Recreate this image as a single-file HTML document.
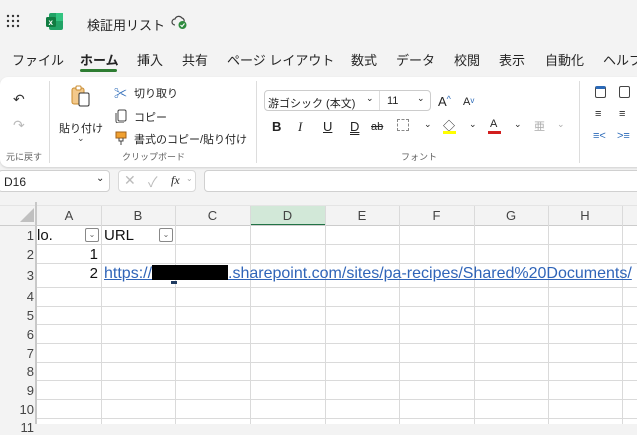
<!DOCTYPE html>
<html><head><meta charset="utf-8"><style>
*{margin:0;padding:0;box-sizing:border-box}
body{width:637px;height:424px;overflow:hidden;background:#f3f3f3;font-family:"Liberation Sans","Noto Sans CJK JP",sans-serif;position:relative;color:#242424}
.a{position:absolute;white-space:nowrap}
.t{font-size:13px;top:50px}
.s{font-size:11px}
.g{color:#616161;font-size:9px}
.hl{position:absolute;height:1px;background:#dadada;left:37px;right:0}
.vl{position:absolute;width:1px;background:#dadada;top:206px;bottom:0}
.ch{position:absolute;top:206px;height:19px;font-size:13px;color:#444;text-align:center;line-height:19px}
.rn{position:absolute;left:0;width:34px;text-align:right;font-size:13px;color:#444}
</style></head><body>
<!-- title bar -->
<svg class="a" style="left:6px;top:14px" width="14" height="14"><g fill="#333"><circle cx="2" cy="2" r="1.2"/><circle cx="7" cy="2" r="1.2"/><circle cx="12" cy="2" r="1.2"/><circle cx="2" cy="7" r="1.2"/><circle cx="7" cy="7" r="1.2"/><circle cx="12" cy="7" r="1.2"/><circle cx="2" cy="12" r="1.2"/><circle cx="7" cy="12" r="1.2"/><circle cx="12" cy="12" r="1.2"/></g></svg>
<svg class="a" style="left:46px;top:13px" width="18" height="17"><rect x="3" y="0" width="14" height="17" rx="2" fill="#21a366"/><rect x="10" y="0" width="7" height="8" fill="#33c481"/><rect x="0" y="4" width="10" height="10" rx="1.5" fill="#107c41"/><text x="2.5" y="12" font-size="8" fill="#fff" font-family="Liberation Sans" font-weight="bold">x</text></svg>
<div class="a" style="left:87px;top:15px;font-size:13px">検証用リスト</div>
<svg class="a" style="left:171px;top:14px" width="16" height="16"><path d="M4 11 A3 3 0 0 1 4 5 A4 4 0 0 1 11 4 A3 3 0 0 1 13 8" fill="none" stroke="#444" stroke-width="1.2"/><circle cx="11.5" cy="11" r="4" fill="#2e8b3e"/><path d="M9.5 11 l1.5 1.5 l2.5-3" stroke="#fff" fill="none" stroke-width="1.1"/></svg>
<!-- tabs -->
<div class="a t" style="left:12px">ファイル</div>
<div class="a t" style="left:80px;font-weight:bold">ホーム</div>
<div class="a" style="left:80px;top:69px;width:37px;height:3px;background:#2e7d32;border-radius:2px"></div>
<div class="a t" style="left:137px">挿入</div>
<div class="a t" style="left:182px">共有</div>
<div class="a t" style="left:227px">ページ レイアウト</div>
<div class="a t" style="left:351px">数式</div>
<div class="a t" style="left:396px">データ</div>
<div class="a t" style="left:454px">校閲</div>
<div class="a t" style="left:499px">表示</div>
<div class="a t" style="left:545px">自動化</div>
<div class="a t" style="left:603px">ヘルプ</div>
<!-- ribbon -->
<div class="a" style="left:0;top:77px;width:650px;height:90px;background:#fff;border-radius:8px;box-shadow:0 1px 2px rgba(0,0,0,.15)"></div>
<div class="a" style="left:49px;top:81px;width:1px;height:82px;background:#ddd"></div>
<div class="a" style="left:256px;top:81px;width:1px;height:82px;background:#ddd"></div>
<div class="a" style="left:579px;top:81px;width:1px;height:82px;background:#ddd"></div>
<div class="a" style="left:13px;top:91px;font-size:14px;color:#333">↶</div>
<div class="a" style="left:13px;top:117px;font-size:14px;color:#bbb">↷</div>
<div class="a g" style="left:6px;top:150px">元に戻す</div>
<svg class="a" style="left:71px;top:85px" width="20" height="22"><rect x="1" y="3" width="12" height="16" rx="2" fill="#f3c98b" stroke="#c98b2e"/><rect x="5" y="1" width="5" height="4" rx="1" fill="#fff" stroke="#c98b2e"/><rect x="8" y="8" width="10" height="13" rx="1.5" fill="#fff" stroke="#333"/></svg>
<div class="a s" style="left:59px;top:120px">貼り付け</div>
<div class="a" style="left:77px;top:133px;font-size:9px;color:#444">⌄</div>
<div class="a" style="left:114px;top:83px;font-size:13px;color:#2b6ab8">✂</div>
<div class="a s" style="left:134px;top:85px">切り取り</div>
<svg class="a" style="left:115px;top:109px" width="12" height="14"><rect x="3" y="1" width="8" height="11" rx="1.5" fill="none" stroke="#444"/><path d="M1 4v8a2 2 0 0 0 2 2h6" fill="none" stroke="#444"/></svg>
<div class="a s" style="left:134px;top:109px">コピー</div>
<svg class="a" style="left:115px;top:131px" width="12" height="14"><rect x="1" y="1" width="10" height="6" fill="#f0a030" stroke="#a0601a"/><path d="M4 7v3h4V7M6 10v4" stroke="#444" fill="none"/></svg>
<div class="a s" style="left:134px;top:131px">書式のコピー/貼り付け</div>
<div class="a g" style="left:122px;top:150px">クリップボード</div>
<!-- font group -->
<div class="a" style="left:264px;top:90px;width:167px;height:21px;border:1px solid #ccc;border-radius:4px"></div>
<div class="a" style="left:379px;top:91px;width:1px;height:19px;background:#ddd"></div>
<div class="a s" style="left:268px;top:95px">游ゴシック (本文)</div>
<div class="a" style="left:366px;top:93px;font-size:9px">⌄</div>
<div class="a s" style="left:387px;top:95px">11</div>
<div class="a" style="left:417px;top:93px;font-size:9px">⌄</div>
<div class="a" style="left:438px;top:94px;font-size:13px">A<span style="font-size:9px;color:#2b6ab8;vertical-align:top">^</span></div>
<div class="a" style="left:463px;top:96px;font-size:11px">A<span style="font-size:8px;color:#2b6ab8;vertical-align:top">v</span></div>
<div class="a" style="left:272px;top:119px;font-size:13px;font-weight:bold">B</div>
<div class="a" style="left:298px;top:119px;font-size:13px;font-style:italic;font-family:'Liberation Serif'">I</div>
<div class="a" style="left:323px;top:119px;font-size:13px;text-decoration:underline">U</div>
<div class="a" style="left:350px;top:119px;font-size:13px;text-decoration:underline double">D</div>
<div class="a" style="left:371px;top:121px;font-size:11px;text-decoration:line-through">ab</div>
<div class="a" style="left:397px;top:119px;width:12px;height:12px;border:1px dashed #888"></div>
<div class="a" style="left:424px;top:119px;font-size:9px">⌄</div>
<div class="a" style="left:443px;top:117px;font-size:12px">◇</div>
<div class="a" style="left:443px;top:131px;width:13px;height:3px;background:#ffff00"></div>
<div class="a" style="left:469px;top:119px;font-size:9px">⌄</div>
<div class="a" style="left:490px;top:118px;font-size:11px">A</div>
<div class="a" style="left:488px;top:131px;width:13px;height:3px;background:#d21e1e"></div>
<div class="a" style="left:514px;top:119px;font-size:9px">⌄</div>
<div class="a" style="left:534px;top:118px;font-size:11px;color:#aaa">亜</div>
<div class="a" style="left:557px;top:119px;font-size:9px;color:#aaa">⌄</div>
<div class="a g" style="left:401px;top:150px">フォント</div>
<div class="a" style="left:595px;top:86px;width:11px;height:12px;border:1.3px solid #444;border-radius:2px;border-top:3px solid #2b6ab8"></div>
<div class="a" style="left:619px;top:86px;width:11px;height:12px;border:1.3px solid #444;border-radius:2px"></div>
<div class="a" style="left:595px;top:108px;font-size:11px">≡</div>
<div class="a" style="left:619px;top:108px;font-size:11px">≡</div>
<div class="a" style="left:593px;top:130px;font-size:11px;color:#2b6ab8">≡&lt;</div>
<div class="a" style="left:617px;top:130px;font-size:11px;color:#2b6ab8">&gt;≡</div>
<!-- formula bar -->
<div class="a" style="left:-2px;top:170px;width:112px;height:22px;background:#fff;border:1px solid #d0d0d0;border-radius:4px"></div>
<div class="a" style="left:4px;top:175px;font-size:12px">D16</div>
<div class="a" style="left:96px;top:173px;font-size:10px">⌄</div>
<div class="a" style="left:118px;top:170px;width:78px;height:22px;background:#fff;border:1px solid #d8d8d8;border-radius:4px"></div>
<div class="a" style="left:124px;top:172px;font-size:14px;color:#bbb">✕</div>
<div class="a" style="left:148px;top:172px;font-size:14px;color:#bbb">✓</div>
<div class="a" style="left:171px;top:173px;font-size:12px;font-style:italic;font-family:'Liberation Serif'">fx</div>
<div class="a" style="left:186px;top:174px;font-size:8px;color:#aaa">⌄</div>
<div class="a" style="left:204px;top:170px;width:440px;height:22px;background:#fff;border:1px solid #d0d0d0;border-radius:4px"></div>
<!-- grid -->
<div class="a" style="left:37px;top:225px;right:0;bottom:0;background:#fff"></div>
<div class="a" style="left:0;top:205px;right:0;height:1px;background:#e4e4e4"></div>
<div class="a" style="left:35px;top:202px;width:2px;height:222px;background:#c8c8c8"></div>
<svg class="a" style="left:19px;top:207px" width="16" height="16"><path d="M15 1V15H1Z" fill="#c0c0c0"/></svg>
<div class="a" style="left:250px;top:206px;width:75px;height:19px;background:#d2e8d8"></div>
<div class="a" style="left:250px;top:224px;width:75px;height:2px;background:#217346"></div>
<div class="a" style="left:0;top:225px;right:0;height:1px;background:#ccc"></div>
<div class="ch" style="left:37px;width:64px">A</div>
<div class="ch" style="left:101px;width:74px">B</div>
<div class="ch" style="left:175px;width:75px">C</div>
<div class="ch" style="left:250px;width:75px">D</div>
<div class="ch" style="left:325px;width:74px">E</div>
<div class="ch" style="left:399px;width:75px">F</div>
<div class="ch" style="left:474px;width:74px">G</div>
<div class="ch" style="left:548px;width:74px">H</div>
<div class="vl" style="left:101px"></div><div class="vl" style="left:175px"></div><div class="vl" style="left:250px"></div><div class="vl" style="left:325px"></div><div class="vl" style="left:399px"></div><div class="vl" style="left:474px"></div><div class="vl" style="left:548px"></div><div class="vl" style="left:622px"></div>
<div class="hl" style="top:244px"></div><div class="hl" style="top:263px"></div><div class="hl" style="top:287px"></div><div class="hl" style="top:306px"></div><div class="hl" style="top:324px"></div><div class="hl" style="top:343px"></div><div class="hl" style="top:362px"></div><div class="hl" style="top:380px"></div><div class="hl" style="top:399px"></div><div class="hl" style="top:418px"></div>
<div class="rn" style="top:228px">1</div><div class="rn" style="top:247px">2</div><div class="rn" style="top:268px">3</div><div class="rn" style="top:289px">4</div><div class="rn" style="top:308px">5</div><div class="rn" style="top:327px">6</div><div class="rn" style="top:346px">7</div><div class="rn" style="top:364px">8</div><div class="rn" style="top:383px">9</div><div class="rn" style="top:402px">10</div><div class="rn" style="top:420px">11</div>
<div class="a" style="left:37px;top:227px;font-size:15px;color:#111">lo.</div>
<div class="a" style="left:85px;top:228px;width:14px;height:14px;border:1px solid #888;border-radius:2px;font-size:8px;text-align:center;line-height:11px;color:#666;background:#fff">⌄</div>
<div class="a" style="left:104px;top:227px;font-size:15px;color:#111">URL</div>
<div class="a" style="left:159px;top:228px;width:14px;height:14px;border:1px solid #888;border-radius:2px;font-size:8px;text-align:center;line-height:11px;color:#666;background:#fff">⌄</div>
<div class="a" style="left:60px;top:246px;width:38px;text-align:right;font-size:15px;color:#111">1</div>
<div class="a" style="left:60px;top:265px;width:38px;text-align:right;font-size:15px;color:#111">2</div>
<div class="a" style="left:104px;top:265px;font-size:16px;color:#2f64b8;text-decoration:underline">https://<span style="display:inline-block;width:76px;height:15px;background:#000;vertical-align:-2px"></span>.sharepoint.com/sites/pa-recipes/Shared%20Documents/</div>
<div class="a" style="left:171px;top:281px;width:6px;height:3px;background:#1e3a60"></div>
</body></html>
